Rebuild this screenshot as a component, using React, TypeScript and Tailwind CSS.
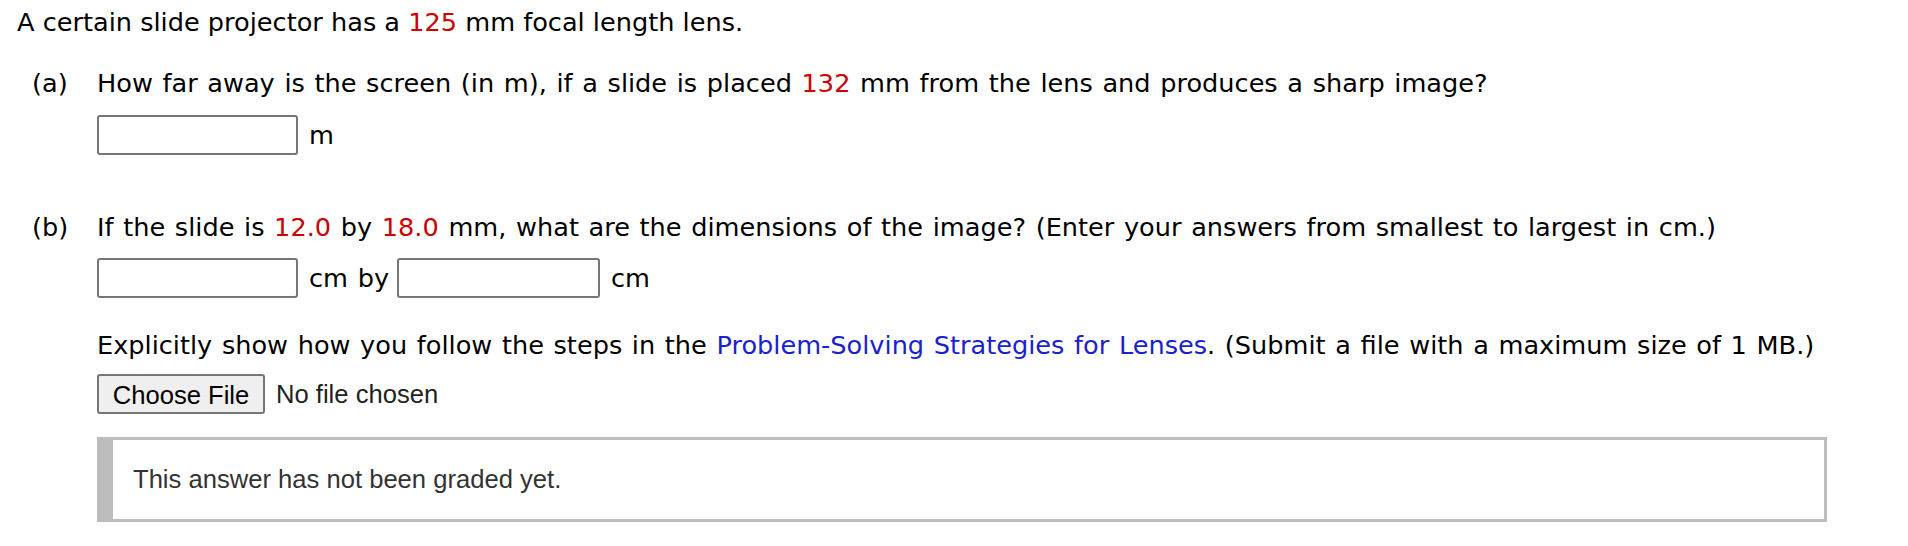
const verdana = { fontFamily: '"DejaVu Sans", Verdana, sans-serif', wordSpacing: '1.5px' };

function AnswerBox({ width }: { width: number }) {
  return (
    <input
      type="text"
      className="h-[40px] rounded-[3px] border-2 border-[#767676] bg-white outline-none"
      style={{ width }}
    />
  );
}

function Red({ children }: { children: React.ReactNode }) {
  return <span className="text-[#cc0000]">{children}</span>;
}

export default function App() {
  return (
    <div className="min-h-[546px] w-[1908px] bg-white text-[25.6px] text-black" style={verdana}>
      <div className="pl-[17px] pt-[6px] leading-[32px]" style={{ wordSpacing: 'normal' }}>
        A certain slide projector has a <Red>125</Red> mm focal length lens.
      </div>

      <div className="mt-[29px] flex pl-[32px]">
        <div className="w-[65px] leading-[32px]">(a)</div>
        <div className="flex flex-col">
          <div className="leading-[32px]">
            How far away is the screen (in m), if a slide is placed <Red>132</Red> mm from the lens and produces a sharp image?
          </div>
          <div className="mt-[16px] flex items-center">
            <AnswerBox width={201} />
            <span className="ml-[11px]">m</span>
          </div>
        </div>
      </div>

      <div className="mt-[56px] flex pl-[32px]">
        <div className="w-[65px] leading-[32px]">(b)</div>
        <div className="flex flex-col">
          <div className="leading-[32px]">
            If the slide is <Red>12.0</Red> by <Red>18.0</Red> mm, what are the dimensions of the image? (Enter your answers from smallest to largest in cm.)
          </div>
          <div className="mt-[15px] flex items-center">
            <AnswerBox width={201} />
            <span className="ml-[11px] mr-[8px]">cm by</span>
            <AnswerBox width={203} />
            <span className="ml-[11px]">cm</span>
          </div>

          <div className="mt-[31px] leading-[32px]">
            Explicitly show how you follow the steps in the{' '}
            <a className="text-[#1a22cc]">Problem-Solving Strategies for Lenses</a>. (Submit a file with a maximum size of 1 MB.)
          </div>

          <div
            className="mt-[13px] flex items-center"
            style={{ fontFamily: '"Liberation Sans", Arial, sans-serif', wordSpacing: 'normal' }}
          >
            <button className="h-[40px] w-[168px] rounded-[3px] border-2 border-[#767676] bg-[#efefef] text-[#000]">
              Choose File
            </button>
            <span className="ml-[11px] text-[#222]">No file chosen</span>
          </div>

          <div
            className="mt-[23px] flex h-[85px] w-[1730px] items-center border-[3px] border-l-[16px] border-[#bdbdbd] pl-[20px] text-[#333]"
            style={{ fontFamily: '"Liberation Sans", Arial, sans-serif', wordSpacing: 'normal' }}
          >
            This answer has not been graded yet.
          </div>
        </div>
      </div>
    </div>
  );
}
